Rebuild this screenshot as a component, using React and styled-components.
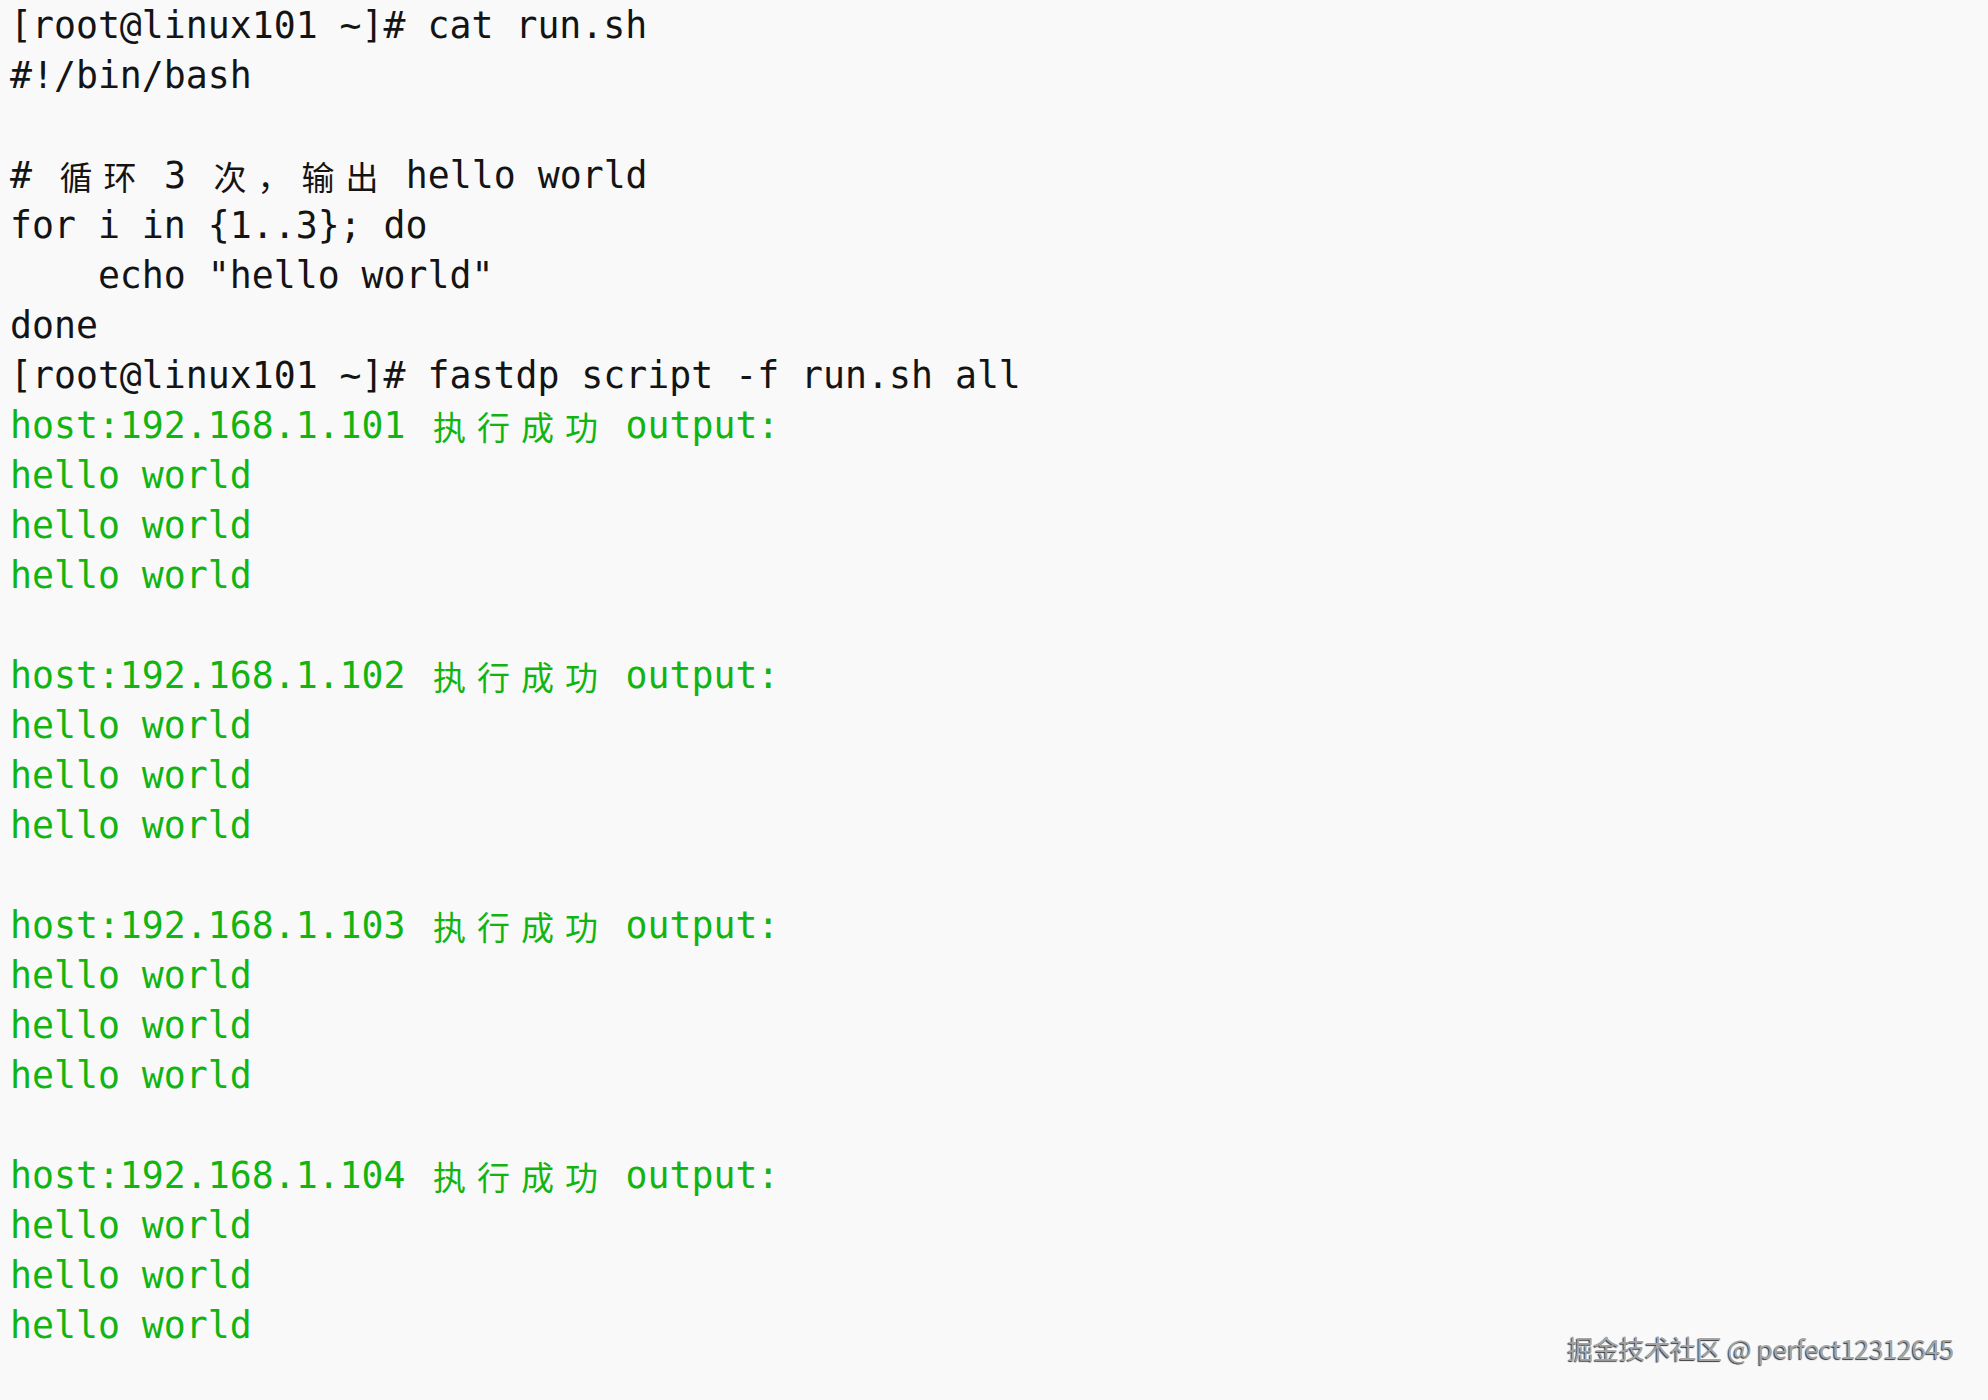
import React from "react";
import styled, { createGlobalStyle } from "styled-components";

const GlobalStyle = createGlobalStyle`
  html, body {
    margin: 0;
    padding: 0;
    background: #f9f9f9;
  }
`;

const lines = [
  { text: "[root@linux101 ~]# cat run.sh" },
  { text: "#!/bin/bash" },
  { text: "" },
  { text: "# 循环 3 次，输出 hello world" },
  { text: "for i in {1..3}; do" },
  { text: "    echo \"hello world\"" },
  { text: "done" },
  { text: "[root@linux101 ~]# fastdp script -f run.sh all" },
];

const hosts = ["101", "102", "103", "104"];

hosts.forEach((h, i) => {
  if (i > 0) lines.push({ text: "" });
  lines.push({ text: `host:192.168.1.${h} 执行成功 output:`, ok: true });
  for (let n = 0; n < 3; n++) lines.push({ text: "hello world", ok: true });
});

const isWide = (ch) => /[\u3000-\u9fff\uff00-\uffef]/.test(ch);

const Screen = styled.div`
  position: relative;
  width: 1988px;
  height: 1400px;
  box-sizing: border-box;
  padding: 1px 0 0 10px;
  background: #f9f9f9;
  overflow: hidden;
`;

const Line = styled.div`
  height: 50px;
  line-height: 50px;
  white-space: pre;
  font-family: "DejaVu Sans Mono", "Noto Sans CJK SC", monospace;
  font-size: 36.5px;
  color: ${(p) => (p.$ok ? "#12b412" : "#141414")};
`;

const Wide = styled.span`
  display: inline-block;
  width: 44px;
  text-align: center;
  font-family: "Noto Sans CJK SC", sans-serif;
  font-size: 33px;
  font-weight: 400;
  vertical-align: top;
`;

const Watermark = styled.div`
  position: absolute;
  right: 34px;
  bottom: 34px;
  font-family: "Noto Sans CJK SC", "Noto Sans", sans-serif;
  font-size: 26px;
  color: #a4a4a4;
  text-shadow: -1px 1px 1px #3a3a3a, 1px -1px 0 #fff;
  letter-spacing: -0.3px;
`;

const renderText = (text) => {
  const parts = [];
  let buf = "";
  [...text].forEach((ch, i) => {
    if (isWide(ch)) {
      if (buf) parts.push(buf);
      buf = "";
      parts.push(<Wide key={i}>{ch}</Wide>);
    } else {
      buf += ch;
    }
  });
  if (buf) parts.push(buf);
  return parts;
};

const App = () => {
  return (
    <>
      <GlobalStyle />
      <Screen>
        {lines.map((line, i) => (
          <Line key={i} $ok={line.ok}>
            {line.text ? renderText(line.text) : " "}
          </Line>
        ))}
        <Watermark>掘金技术社区 @ perfect12312645</Watermark>
      </Screen>
    </>
  );
};

export default App;
